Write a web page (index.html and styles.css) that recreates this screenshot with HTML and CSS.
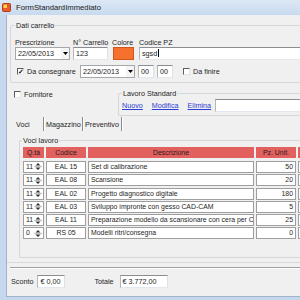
FILE: index.html
```html
<!DOCTYPE html>
<html lang="it">
  <head>
    <meta charset="UTF-8" />
    <title>FormStandardImmediato</title>
    <link rel="stylesheet" href="styles.css">
  </head>
  <body>
    <div class="window">
      <div class="titlebar">
        <svg class="app-icon" width="9" height="9" viewBox="0 0 9 9">
          <rect x="0.5" y="0.5" width="8" height="8" rx="1" fill="#e65a2c" stroke="#b43c1d" />
          <rect x="1.5" y="1.5" width="3.5" height="3.5" fill="#f6d54a" />
        </svg>
        <span>FormStandardImmediato</span>
      </div>

      <div class="frame">
        <div class="client">
          <fieldset class="group carrello">
            <legend>Dati carrello</legend>
            <div class="row1">
              <div class="field f-presc">
                <label>Prescrizione</label>
                <div class="combo">
                  <span>22/05/2013</span>
                  <span class="drop"><svg width="5" height="3" viewBox="0 0 5 3"><path d="M0 0h5L2.5 3z" fill="#000" /></svg></span>
                </div>
              </div>
              <div class="field f-num">
                <label>N° Carrello</label>
                <div class="input">123</div>
              </div>
              <div class="field f-color">
                <label>Colore</label>
                <div class="swatch"></div>
              </div>
              <div class="field f-code">
                <label>Codice PZ</label>
                <div class="input">sgsd<span class="caret"></span></div>
              </div>
            </div>
            <div class="row2">
              <div class="check-label w-consegna"><span class="check checked">✓</span>Da consegnare</div>
              <div class="combo">
                <span>22/05/2013</span>
                <span class="drop"><svg width="5" height="3" viewBox="0 0 5 3"><path d="M0 0h5L2.5 3z" fill="#000" /></svg></span>
              </div>
              <div class="input small">00</div>
              <div class="input small">00</div>
              <div class="check-label finire"><span class="check"></span>Da finire</div>
            </div>
          </fieldset>

          <div class="middle">
            <div class="check-label fornitore"><span class="check"></span>Fornitore</div>
            <fieldset class="group lavoro">
              <legend>Lavoro Standard</legend>
              <div class="lavoro-row">
                <div class="links">
                  <a href="#">Nuovo</a>
                  <a href="#">Modifica</a>
                  <a href="#">Elimina</a>
                </div>
                <div class="input wide"></div>
              </div>
            </fieldset>
          </div>

          <div class="tabs">
            <span class="tab active">Voci</span>
            <span class="tab">Magazzino</span>
            <span class="tab">Preventivo</span>
          </div>

          <div class="tab-page">
            <fieldset class="group voci">
              <legend>Voci lavoro</legend>
              <div class="grid">
                <div class="grid-row head">
                  <div>Q.tà</div>
                  <div>Codice</div>
                  <div>Descrizione</div>
                  <div>Pz. Unit.</div>
                  <div></div>
                </div>
                <div class="grid-row">
                  <div class="qty">11<svg class="spin" width="8" height="9" viewBox="0 0 8 9"><path d="M4 1L6.5 3.5h-5z M4 8L6.5 5.5h-5z" fill="#333" /><path d="M0 4.5h8" stroke="#999" stroke-width="0.6" /></svg></div>
                  <div class="code">EAL 15</div>
                  <div class="desc">Set di calibrazione</div>
                  <div class="num">50</div>
                  <div></div>
                </div>
                <div class="grid-row">
                  <div class="qty">11<svg class="spin" width="8" height="9" viewBox="0 0 8 9"><path d="M4 1L6.5 3.5h-5z M4 8L6.5 5.5h-5z" fill="#333" /><path d="M0 4.5h8" stroke="#999" stroke-width="0.6" /></svg></div>
                  <div class="code">EAL 08</div>
                  <div class="desc">Scansione</div>
                  <div class="num">20</div>
                  <div></div>
                </div>
                <div class="grid-row">
                  <div class="qty">11<svg class="spin" width="8" height="9" viewBox="0 0 8 9"><path d="M4 1L6.5 3.5h-5z M4 8L6.5 5.5h-5z" fill="#333" /><path d="M0 4.5h8" stroke="#999" stroke-width="0.6" /></svg></div>
                  <div class="code">EAL 02</div>
                  <div class="desc">Progetto diagnostico digitale</div>
                  <div class="num">180</div>
                  <div></div>
                </div>
                <div class="grid-row">
                  <div class="qty">11<svg class="spin" width="8" height="9" viewBox="0 0 8 9"><path d="M4 1L6.5 3.5h-5z M4 8L6.5 5.5h-5z" fill="#333" /><path d="M0 4.5h8" stroke="#999" stroke-width="0.6" /></svg></div>
                  <div class="code">EAL 03</div>
                  <div class="desc">Sviluppo impronte con gesso CAD-CAM</div>
                  <div class="num">5</div>
                  <div></div>
                </div>
                <div class="grid-row">
                  <div class="qty">11<svg class="spin" width="8" height="9" viewBox="0 0 8 9"><path d="M4 1L6.5 3.5h-5z M4 8L6.5 5.5h-5z" fill="#333" /><path d="M0 4.5h8" stroke="#999" stroke-width="0.6" /></svg></div>
                  <div class="code">EAL 11</div>
                  <div class="desc">Preparazione modello da scansionare con cera per C</div>
                  <div class="num">25</div>
                  <div></div>
                </div>
                <div class="grid-row">
                  <div class="qty">0<svg class="spin" width="8" height="9" viewBox="0 0 8 9"><path d="M4 1L6.5 3.5h-5z M4 8L6.5 5.5h-5z" fill="#333" /><path d="M0 4.5h8" stroke="#999" stroke-width="0.6" /></svg></div>
                  <div class="code">RS 05</div>
                  <div class="desc">Modelli ritri/consegna</div>
                  <div class="num">0</div>
                  <div></div>
                </div>
              </div>
            </fieldset>
          </div>

          <div class="separator"></div>

          <div class="totals">
            <span class="lbl-sconto">Sconto</span>
            <div class="input sconto">€ 0,00</div>
            <span class="lbl-totale">Totale</span>
            <div class="input totale">€ 3.772,00</div>
          </div>
        </div>
      </div>
    </div>
  </body>
</html>
```

FILE: styles.css
```css
* {
  box-sizing: border-box;
}

body {
  margin: 0;
  width: 300px;
  height: 300px;
  overflow: hidden;
  font-family: "Liberation Sans", Arial, sans-serif;
  font-size: 7.2px;
  color: #1e1e1e;
  background: #fff;
}

.window {
  width: 440px;
  height: 300px;
  display: flex;
  flex-direction: column;
  background: #c6d8ed;
}

.titlebar {
  height: 15px;
  flex: none;
  display: flex;
  align-items: center;
  gap: 5px;
  padding-left: 2px;
  background: linear-gradient(#dde8f5, #c8daef);
  font-size: 7.7px;
  color: #1b1b1b;
}

.app-icon {
  display: block;
}

.frame {
  flex: 1;
  display: flex;
  padding: 0 0 3px 6px;
}

.client {
  flex: 1;
  display: flex;
  flex-direction: column;
  background: #f0f0f0;
  border-left: 1px solid #9fb3ca;
  border-bottom: 1px solid #9fb3ca;
}

/* group boxes */
.group {
  margin: 0;
  border: 1px solid #d3d8dc;
  border-radius: 2px;
  min-width: 0;
}

.group legend {
  padding: 0 1px;
  line-height: 9px;
}

.carrello {
  margin: 6px 0 0 3px;
  padding: 8px 0 4px 4px;
}

.field {
  display: flex;
  flex-direction: column;
}

.field label {
  line-height: 9px;
  white-space: nowrap;
}

.row1 {
  display: flex;
}

.f-presc {
  width: 55px;
}

.f-num {
  width: 35px;
  margin-left: 3px;
}

.f-color {
  width: 22px;
  margin-left: 4px;
}

.f-code {
  flex: 1;
  margin-left: 5px;
}

.input,
.combo {
  height: 13px;
  line-height: 11px;
  padding: 0 2px;
  background: #fff;
  border: 1px solid;
  border-color: #8a8c90 #dde1e6 #e3e8ee #b4b7bd;
  white-space: nowrap;
  overflow: hidden;
}

.combo {
  display: flex;
  justify-content: space-between;
  align-items: center;
  padding-right: 0;
  border-color: #a5a7ab;
  width: 55px;
}

.drop {
  width: 8px;
  height: 11px;
  display: flex;
  align-items: center;
  justify-content: center;
  background: #f4f4f4;
}

.drop svg {
  display: block;
}

.swatch {
  margin-left: 1px;
  width: 21px;
  height: 13px;
  background: #f5712d;
  border: 1px solid #d2561c;
}

.caret {
  display: inline-block;
  width: 1px;
  height: 8px;
  margin-left: 1px;
  background: #000;
  vertical-align: -1px;
}

.row2 {
  display: flex;
  align-items: center;
  margin-top: 5px;
}

.check-label {
  display: flex;
  align-items: center;
  gap: 3px;
  white-space: nowrap;
  line-height: 9px;
}

.check {
  width: 7px;
  height: 7px;
  flex: none;
  border: 1px solid;
  border-color: #5d5d5d #e6e6e6 #e6e6e6 #5d5d5d;
  background: #fff;
  font-size: 7px;
  line-height: 5px;
  text-align: center;
  color: #111;
  font-weight: bold;
}

.w-consegna {
  width: 65px;
  padding-left: 2px;
}

.input.small {
  width: 16px;
  margin-left: 3px;
}

.finire {
  margin-left: 10px;
}

/* fornitore + lavoro standard */
.middle {
  display: flex;
  align-items: flex-start;
  margin-top: 6px;
}

.fornitore {
  width: 111px;
  padding-left: 7px;
  margin-top: 0.5px;
}

.lavoro {
  flex: 1;
  padding: 1px 0 3px 3px;
  border-right: none;
}

.lavoro-row {
  display: flex;
  align-items: center;
}

.links {
  width: 93px;
  display: flex;
  gap: 9px;
}

.links a {
  color: #2c3ed4;
  text-decoration: underline;
}

.input.wide {
  flex: 1;
}

/* tabs */
.tabs {
  display: flex;
  height: 14px;
  margin-top: 1px;
}

.tab {
  display: flex;
  align-items: center;
  border-right: 1px solid #8c8c8c;
  box-shadow: 1px 0 0 #fff;
}

.tab.active {
  width: 37px;
  padding-left: 9px;
}

.tab + .tab {
  width: 39px;
  padding-left: 2px;
}

.tab-page {
  padding: 5px 0 4px 12px;
  border-bottom: 1px solid #dadada;
}

.voci {
  height: 122px;
  padding: 2px 0 0 2px;
  border-right: none;
}

.grid {
  display: flex;
  flex-direction: column;
  gap: 1.3px;
  padding-left: 1px;
}

.grid-row {
  display: grid;
  grid-template-columns: 21px 40px 166px 40px 60px;
  column-gap: 2px;
  height: 12px;
  font-size: 6.9px;
}

.grid-row div {
  background: #fff;
  border: 1px solid #9e9e9e;
  line-height: 10px;
  padding: 0 2px;
  white-space: nowrap;
  overflow: hidden;
}

.grid-row.head {
  height: 11px;
  margin-bottom: 1.7px;
}

.grid-row.head div {
  background: #e2605e;
  border: none;
  line-height: 11px;
  text-align: center;
  color: #2a1a1a;
}

.grid-row .qty {
  display: flex;
  align-items: center;
  justify-content: space-between;
  padding-right: 1px;
}

.spin {
  display: block;
}

.grid-row .code {
  text-align: center;
}

.grid-row .num {
  text-align: right;
}

.separator {
  margin-top: 4px;
  margin-left: 3px;
  border-top: 1px solid #a0a0a0;
  border-bottom: 1px solid #fff;
}

/* totals */
.totals {
  display: flex;
  align-items: center;
  margin-top: 6px;
  padding-left: 4px;
}

.input.sconto {
  width: 28px;
  margin-left: 4px;
}

.lbl-totale {
  margin-left: 29px;
}

.input.totale {
  width: 48px;
  margin-left: 6px;
}
```
